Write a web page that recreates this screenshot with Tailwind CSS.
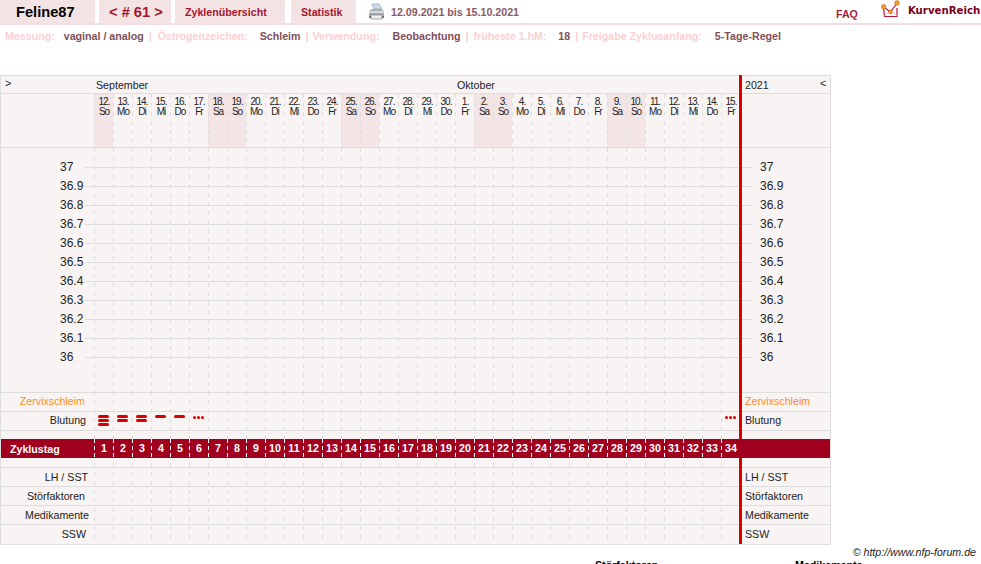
<!DOCTYPE html>
<html lang="de">
<head>
<meta charset="utf-8">
<title>Feline87</title>
<script src="https://cdn.jsdelivr.net/npm/@tailwindcss/browser@4"></script>
</head>
<body class="w-[981px] h-[564px] overflow-hidden bg-white font-['Liberation_Sans',Arial,sans-serif] text-[10.67px] text-[#222]">

<!-- Header -->
<header class="flex h-[25px] border-b-2 border-[#f3dfe2] font-bold">
  <div class="w-[95px] pl-[16px] flex items-center bg-[#f3e3e5] text-[14.67px] text-black">Feline87</div>
  <div class="w-[72px] ml-[4px] pl-[10px] flex items-center bg-[#f3e3e5] text-[14.67px] text-[#a3162e]">&lt; # 61 &gt;</div>
  <div class="w-[110px] ml-[4px] pl-[10px] flex items-center bg-[#f3e3e5] text-[#a3162e]">Zyklenübersicht</div>
  <div class="w-[65px] ml-[6px] pl-[10px] flex items-center bg-[#f3e3e5] text-[#a3162e]">Statistik</div>
  <div class="ml-[12px] flex items-center w-[17px]">
    <svg width="17" height="18" viewBox="0 0 17 18">
      <path d="M4 1h7l3 5H6z" fill="#cfdbe6" stroke="#8fa0ad" stroke-width=".7"/>
      <path d="M1 8l3-2h9l3 2v5H1z" fill="#a8adb2"/>
      <path d="M1 8h15v2H1z" fill="#d6d9dc"/>
      <path d="M3 12h11v4H3z" fill="#f1f2f3" stroke="#7c8287" stroke-width=".7"/>
      <path d="M1 13h2v2H1zM14 13h2v2h-2z" fill="#6d7378"/>
    </svg>
  </div>
  <div class="ml-[6px] flex items-center text-[#8a5a62]">12.09.2021 bis 15.10.2021</div>
  <div class="ml-[317px] pt-[6px] text-[#a3233a]">FAQ</div>
  <div class="ml-[23px] w-[20px] h-[20px]">
    <svg width="20" height="20" viewBox="0 0 20 20">
      <path d="M2.5 8l1 8.5h12.5V8" fill="none" stroke="#b5123a" stroke-width="1.2"/>
      <path d="M3.5 16l4-4M16 16l-4-4" fill="none" stroke="#e7b7c2" stroke-width=".8"/>
      <path d="M2.5 7l7 5 6.5-9" fill="none" stroke="#b5123a" stroke-width="1.2"/>
      <circle cx="2.7" cy="6.8" r="2.4" fill="#f29a1f" stroke="#c8452a" stroke-width=".4"/>
      <circle cx="9.5" cy="12" r="2.1" fill="#f29a1f" stroke="#c8452a" stroke-width=".4"/>
      <circle cx="16" cy="3" r="2.4" fill="#f29a1f" stroke="#c8452a" stroke-width=".4"/>
    </svg>
  </div>
  <div class="ml-[7px] pt-[3px] font-['DejaVu_Sans',sans-serif] text-[10.2px] text-[#7a0018]">KurvenReich</div>
</header>

<!-- Settings line -->
<div class="flex h-[22px] items-center pl-[5px] font-bold text-[#fbd0d3]">
  <span>Messung:</span>
  <span class="ml-[9px] text-[#7f5058]">vaginal / analog</span>
  <span class="ml-[5px]">|</span>
  <span class="ml-[6px]">Östrogenzeichen:</span>
  <span class="ml-[12px] text-[#7f5058]">Schleim</span>
  <span class="ml-[5px]">|</span>
  <span class="ml-[4px]">Verwendung:</span>
  <span class="ml-[13px] text-[#7f5058]">Beobachtung</span>
  <span class="ml-[5px]">|</span>
  <span class="ml-[5px]">früheste 1.hM:</span>
  <span class="ml-[12px] text-[#7f5058]">18</span>
  <span class="ml-[5px]">|</span>
  <span class="ml-[4px]">Freigabe Zyklusanfang:</span>
  <span class="ml-[13px] text-[#7f5058]">5-Tage-Regel</span>
</div>

<!-- Chart -->
<main class="relative mt-[28px] w-[831px] h-[470px] border border-[#ddd] bg-[#f9f4f4] flex flex-col">
  <!-- dashes and end-of-cycle bar, lying over the rows -->
  <svg class="absolute left-[93px] top-[18px] pointer-events-none" width="646" height="450" aria-hidden="true">
    <defs><pattern id="d" width="19" height="9" patternUnits="userSpaceOnUse"><rect width="1" height="4" fill="#dcdcdc"/></pattern></defs>
    <rect width="646" height="450" fill="url(#d)"/>
  </svg>
  <div class="absolute left-[738px] top-[-1px] bottom-0 w-[3px] bg-[#d90000]"></div>

  <!-- Months -->
  <div class="flex h-[18px] border-b border-[#ddd] shrink-0">
    <div class="w-[93px] pl-[4px] leading-[15px]">&gt;</div>
    <div class="w-[362px] pl-[2px] leading-[19px]">September</div>
    <div class="w-[288px] pl-[1px] leading-[19px]">Oktober</div>
    <div class="w-[76px] pl-[1px] leading-[19px]">2021</div>
    <div class="leading-[15px]">&lt;</div>
  </div>

  <!-- Days -->
  <div class="flex h-[54px] border-b border-[#ddd] shrink-0">
    <div class="w-[93px] shrink-0"></div>
    <div class="flex text-[10px] leading-[10px] tracking-[-1px] text-center text-[#222] [&>div]:w-[19px] [&>div]:pt-[3px] [&>div]:pl-px">
      <div class="bg-[#f3e4e6]">12.<br>So</div><div>13.<br>Mo</div><div>14.<br>Di</div><div>15.<br>Mi</div><div>16.<br>Do</div><div>17.<br>Fr</div>
      <div class="bg-[#f3e4e6]">18.<br>Sa</div><div class="bg-[#f3e4e6]">19.<br>So</div><div>20.<br>Mo</div><div>21.<br>Di</div><div>22.<br>Mi</div><div>23.<br>Do</div><div>24.<br>Fr</div>
      <div class="bg-[#f3e4e6]">25.<br>Sa</div><div class="bg-[#f3e4e6]">26.<br>So</div><div>27.<br>Mo</div><div>28.<br>Di</div><div>29.<br>Mi</div><div>30.<br>Do</div><div>1.<br>Fr</div>
      <div class="bg-[#f3e4e6]">2.<br>Sa</div><div class="bg-[#f3e4e6]">3.<br>So</div><div>4.<br>Mo</div><div>5.<br>Di</div><div>6.<br>Mi</div><div>7.<br>Do</div><div>8.<br>Fr</div>
      <div class="bg-[#f3e4e6]">9.<br>Sa</div><div class="bg-[#f3e4e6]">10.<br>So</div><div>11.<br>Mo</div><div>12.<br>Di</div><div>13.<br>Mi</div><div>14.<br>Do</div><div>15.<br>Fr</div>
    </div>
  </div>

  <!-- Temperature scale -->
  <div class="h-[245px] pt-[10px] border-b border-[#ddd] shrink-0 text-[12px] text-[#222] [&>div]:flex [&>div]:items-center [&>div]:h-[19px] [&_i]:h-px [&_i]:w-[667px] [&_i]:bg-[#ddd] [&_i]:shrink-0 [&_b]:font-normal [&_b]:w-[84px] [&_b]:pl-[59px] [&_b]:pb-[2px] [&_b]:shrink-0 [&_span]:ml-[8px] [&_span]:pb-[2px]">
    <div><b>37</b><i></i><span>37</span></div>
    <div><b>36.9</b><i></i><span>36.9</span></div>
    <div><b>36.8</b><i></i><span>36.8</span></div>
    <div><b>36.7</b><i></i><span>36.7</span></div>
    <div><b>36.6</b><i></i><span>36.6</span></div>
    <div><b>36.5</b><i></i><span>36.5</span></div>
    <div><b>36.4</b><i></i><span>36.4</span></div>
    <div><b>36.3</b><i></i><span>36.3</span></div>
    <div><b>36.2</b><i></i><span>36.2</span></div>
    <div><b>36.1</b><i></i><span>36.1</span></div>
    <div><b>36</b><i></i><span>36</span></div>
  </div>

  <!-- Zervixschleim -->
  <div class="flex items-center h-[19px] pb-[2px] border-b border-[#ddd] shrink-0 text-[#ff8c1a]">
    <div class="w-[84px] text-right">Zervixschleim</div>
    <div class="ml-[660px]">Zervixschleim</div>
  </div>

  <!-- Blutung -->
  <div class="flex items-center h-[19px] border-b border-[#ddd] shrink-0">
    <div class="w-[85px] shrink-0 text-right pb-[2px]">Blutung</div>
    <div class="w-[654px] shrink-0 h-full pl-[3px] pt-[3px] flex [&>div]:w-[19px] [&>div]:shrink-0 [&>div]:flex [&>div]:flex-col [&>div]:gap-px [&_i]:block [&_i]:w-[11px] [&_i]:h-[3px] [&_i]:rounded-full [&_i]:bg-[#d80000] [&_u]:w-[3px] [&_u]:h-[3px] [&_u]:rounded-full [&_u]:bg-[#d80000]">
      <div class="invisible w-[9px]!"></div>
      <div><i></i><i></i><i></i></div>
      <div><i></i><i></i></div>
      <div><i></i><i></i></div>
      <div><i></i></div>
      <div><i></i></div>
      <div class="flex-row! gap-[1px]! pt-px"><u></u><u></u><u></u></div>
      <div class="ml-[513px] flex-row! gap-[1px]! pt-px"><u></u><u></u><u></u></div>
    </div>
    <div class="ml-[5px] pb-[2px]">Blutung</div>
  </div>

  <div class="h-[8px] shrink-0"></div>

  <!-- Zyklustag -->
  <div class="relative z-10 flex items-center h-[19px] bg-[#a0001e] text-white font-bold shrink-0">
    <div class="w-[93px] shrink-0 pl-[9px]">Zyklustag</div>
    <div class="flex h-full items-center text-center [&>div]:w-[19px] [&>div]:leading-[19px] [&>div]:bg-[linear-gradient(#fff_4px,transparent_4px)] [&>div]:bg-[length:1px_7px] [&>div]:bg-repeat-y [&>div]:pl-px">
      <div>1</div><div>2</div><div>3</div><div>4</div><div>5</div><div>6</div><div>7</div><div>8</div><div>9</div><div>10</div><div>11</div><div>12</div><div>13</div><div>14</div><div>15</div><div>16</div><div>17</div><div>18</div><div>19</div><div>20</div><div>21</div><div>22</div><div>23</div><div>24</div><div>25</div><div>26</div><div>27</div><div>28</div><div>29</div><div>30</div><div>31</div><div>32</div><div>33</div><div>34</div>
    </div>
  </div>

  <div class="h-[10px] border-b border-[#ddd] shrink-0"></div>

  <!-- Lower rows -->
  <div class="flex items-center h-[19px] border-b border-[#ddd] shrink-0"><div class="w-[87px] text-right">LH / SST</div><div class="ml-[657px]">LH / SST</div></div>
  <div class="flex items-center h-[19px] border-b border-[#ddd] shrink-0"><div class="w-[84px] text-right">Störfaktoren</div><div class="ml-[660px]">Störfaktoren</div></div>
  <div class="flex items-center h-[19px] border-b border-[#ddd] shrink-0"><div class="w-[88px] text-right">Medikamente</div><div class="ml-[656px]">Medikamente</div></div>
  <div class="flex items-center h-[18px] shrink-0"><div class="w-[85px] text-right">SSW</div><div class="ml-[659px]">SSW</div></div>
</main>

<!-- Footer -->
<div class="flex justify-end h-[14px] pr-[5px] italic leading-[15px] text-[#222]">© http://www.nfp-forum.de</div>
<div class="flex font-bold pl-[595px] text-black leading-[12px]">
  <span class="w-[200px]">Störfaktoren</span>
  <span>Medikamente</span>
</div>
</body>
</html>
